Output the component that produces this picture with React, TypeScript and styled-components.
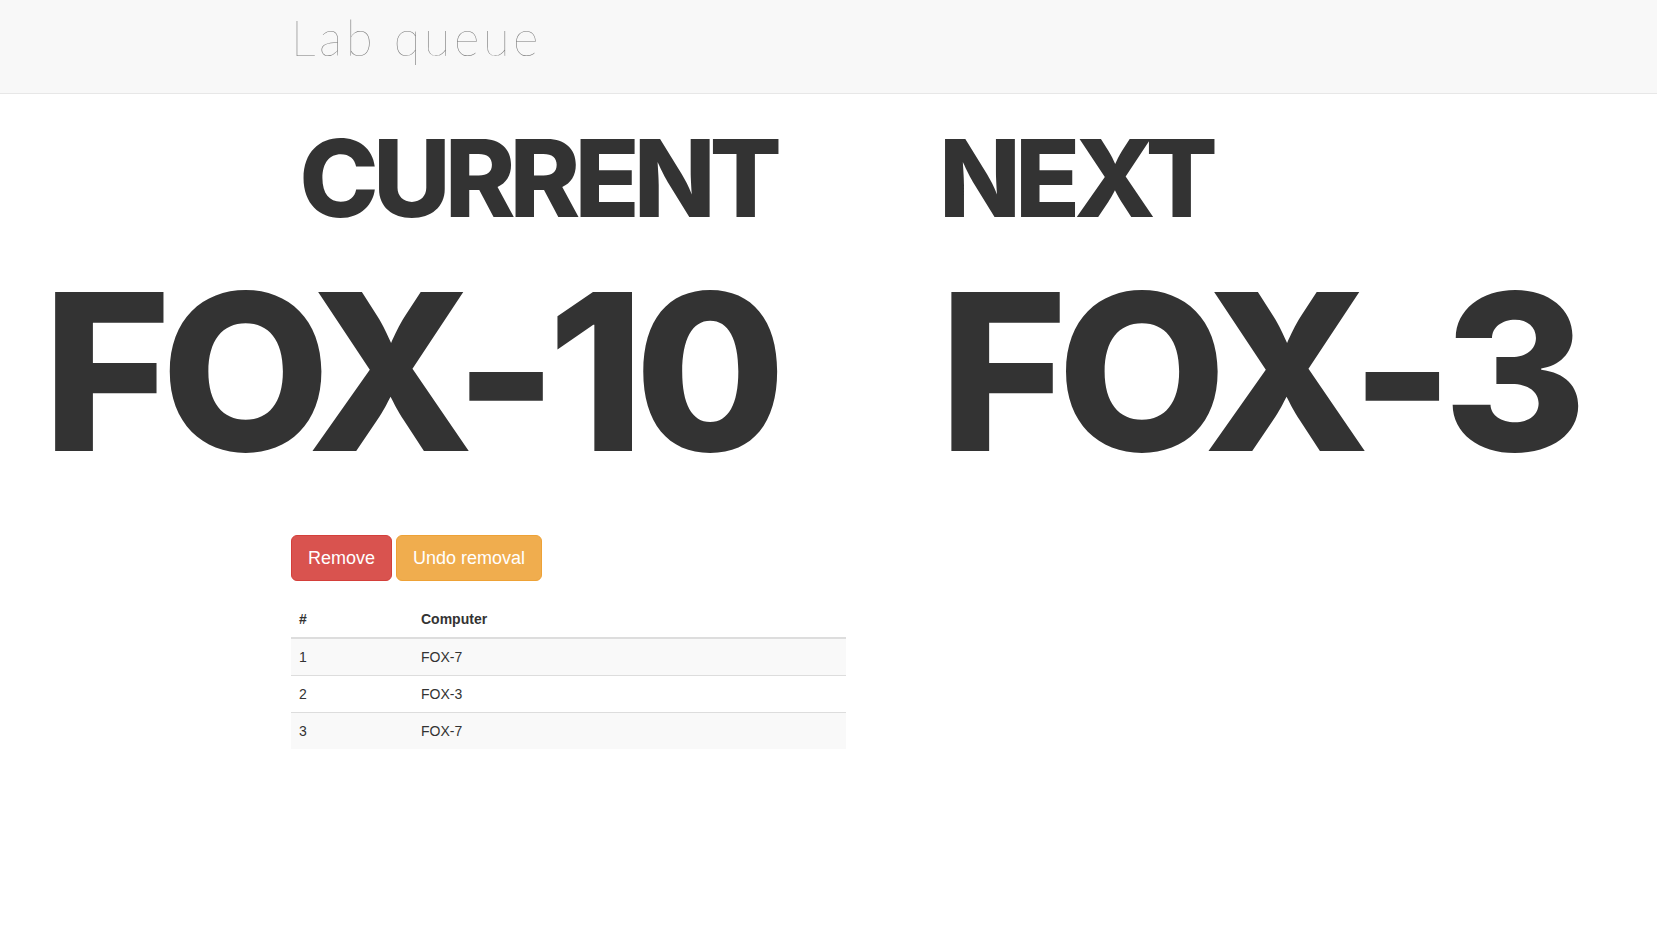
import React from "react";
import styled, { createGlobalStyle } from "styled-components";

const Global = createGlobalStyle`
  html, body { margin: 0; padding: 0; background: #fff; }
  body {
    font-family: "Liberation Sans", Arial, sans-serif;
    font-size: 14px;
    line-height: 1.42857;
    color: #333;
  }
  * { box-sizing: border-box; }
`;

const Navbar = styled.header`
  height: 94px;
  background: #f8f8f8;
  border-bottom: 1px solid #e7e7e7;
`;

const Container = styled.div`
  width: 1075px;
  margin: 0 auto;
`;

const Brand = styled.h1`
  margin: 0;
  padding-top: 7px;
  font-family: "Lato", sans-serif;
  font-weight: 100;
  font-size: 49px;
  line-height: 60px;
  color: #777;
  letter-spacing: 3.6px;
`;

const Board = styled.section`
  display: grid;
  grid-template-columns: 776px 1fr;
  column-gap: 163px;
  padding-top: 29px;
`;

const Column = styled.div<{ $align: "left" | "right" }>`
  text-align: ${(p) => p.$align};
  display: flex;
  flex-direction: column;
  align-items: ${(p) => (p.$align === "right" ? "flex-end" : "flex-start")};
`;

const Label = styled.div`
  font-family: "Inter", sans-serif;
  font-weight: 800;
  font-size: 107px;
  line-height: 110px;
  color: #333;
  letter-spacing: -6px;
  white-space: nowrap;
`;

const Ticket = styled.div`
  font-family: "Inter", sans-serif;
  font-weight: 800;
  font-size: 219px;
  line-height: 219px;
  color: #333;
  letter-spacing: -10px;
  white-space: nowrap;
  margin-top: 29px;
`;

const Actions = styled.div`
  display: flex;
  gap: 4px;
  margin-top: 54px;
`;

const Button = styled.button<{ $variant: "danger" | "warning" }>`
  font-family: "Liberation Sans", Arial, sans-serif;
  font-size: 18px;
  line-height: 24px;
  padding: 10px 16px;
  border-radius: 6px;
  color: #fff;
  cursor: pointer;
  background: ${(p) => (p.$variant === "danger" ? "#d9534f" : "#f0ad4e")};
  border: 1px solid ${(p) => (p.$variant === "danger" ? "#d43f3a" : "#eea236")};
`;

const Table = styled.table`
  width: 555px;
  border-collapse: collapse;
  border-spacing: 0;
  margin-top: 20px;
  font-size: 14px;
`;

const Th = styled.th<{ $w?: number }>`
  text-align: left;
  font-weight: bold;
  padding: 8px;
  line-height: 20px;
  border-bottom: 2px solid #ddd;
  width: ${(p) => (p.$w ? `${p.$w}px` : "auto")};
`;

const Row = styled.tr<{ $striped: boolean }>`
  background: ${(p) => (p.$striped ? "#f9f9f9" : "transparent")};
`;

const Td = styled.td`
  padding: 8px;
  line-height: 20px;
  border-top: 1px solid #ddd;
`;

const queue = ["FOX-7", "FOX-3", "FOX-7"];

export default function App() {
  return (
    <>
      <Global />
      <Navbar>
        <Container>
          <Brand>Lab queue</Brand>
        </Container>
      </Navbar>
      <Board>
        <Column $align="right">
          <Label>CURRENT</Label>
          <Ticket>FOX-10</Ticket>
        </Column>
        <Column $align="left">
          <Label>NEXT</Label>
          <Ticket>FOX-3</Ticket>
        </Column>
      </Board>
      <Container>
        <Actions>
          <Button $variant="danger">Remove</Button>
          <Button $variant="warning">Undo removal</Button>
        </Actions>
        <Table>
          <thead>
            <tr>
              <Th $w={122}>#</Th>
              <Th>Computer</Th>
            </tr>
          </thead>
          <tbody>
            {queue.map((c, i) => (
              <Row key={i} $striped={i % 2 === 0}>
                <Td>{i + 1}</Td>
                <Td>{c}</Td>
              </Row>
            ))}
          </tbody>
        </Table>
      </Container>
    </>
  );
}
